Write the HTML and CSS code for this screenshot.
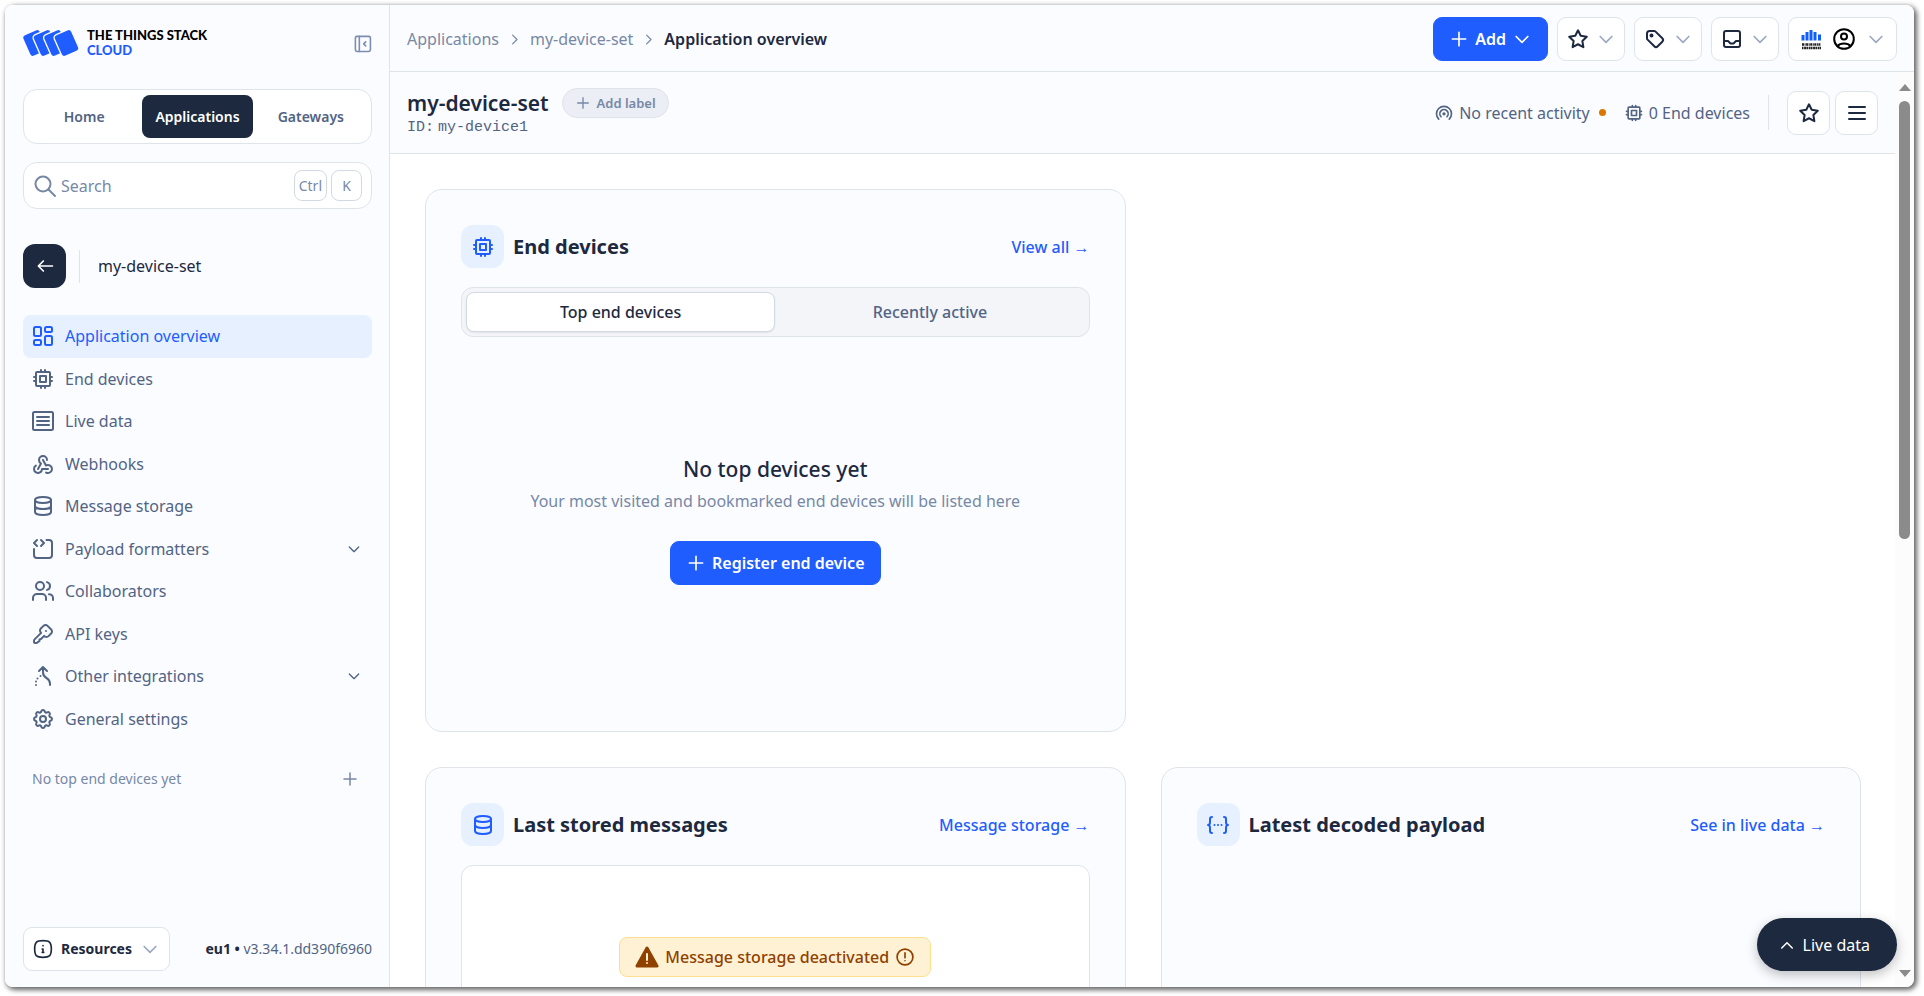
FILE: index.html
```html
<!DOCTYPE html>
<html lang="en">
<head>
    <meta charset="UTF-8">
    <meta name="viewport" content="width=device-width, initial-scale=1.0">
    <title>Application overview - my-device-set - The Things Stack Cloud</title>
    <link rel="stylesheet" href="styles.css">
</head>
<body>

    <!-- icon set -->
    <svg class="sprite" aria-hidden="true">
        <symbol id="i-cpu" viewBox="0 0 24 24"><rect x="5" y="5" width="14" height="14" rx="1"/><path d="M9 9h6v6H9zM3 10h2M3 14h2M10 3v2M14 3v2M21 10h-2M21 14h-2M14 21v-2M10 21v-2"/></symbol>
        <symbol id="i-dashboard" viewBox="0 0 24 24"><rect x="3" y="3" width="7" height="9" rx="1.5"/><rect x="3" y="16" width="7" height="5" rx="1.5"/><rect x="14" y="3" width="7" height="5" rx="1.5"/><rect x="14" y="12" width="7" height="9" rx="1.5"/></symbol>
        <symbol id="i-list" viewBox="0 0 24 24"><rect x="2" y="3" width="20" height="18" rx="1.5"/><path d="M6 8h12M6 12h12M6 16h12"/></symbol>
        <symbol id="i-webhook" viewBox="0 0 24 24"><path d="M4.876 13.61a4 4 0 1 0 6.124 3.39h6M15.066 20.502a4 4 0 1 0 1.934-7.502c-.706 0-1.424.179-2 .5l-3-5.5M16 8a4 4 0 1 0-8 0c0 1.506.77 2.818 2 3.5l-3 5.5"/></symbol>
        <symbol id="i-database" viewBox="0 0 24 24"><ellipse cx="12" cy="6" rx="8" ry="3"/><path d="M4 6v6a8 3 0 0 0 16 0V6M4 12v6a8 3 0 0 0 16 0v-6"/></symbol>
        <symbol id="i-source" viewBox="0 0 24 24"><path d="M15.500 3H18a3 3 0 0 1 3 3v12a3 3 0 0 1-3 3H6a3 3 0 0 1-3-3v-6M6 3L3 6l3 3M10 9l3-3-3-3"/></symbol>
        <symbol id="i-users" viewBox="0 0 24 24"><circle cx="9" cy="7" r="4"/><path d="M2 21v-2a4 4 0 0 1 4-4h5a4 4 0 0 1 4 4v2M16 3.13a4 4 0 0 1 0 7.75M22 21v-2a4 4 0 0 0-4-3.850"/></symbol>
        <symbol id="i-key" viewBox="0 0 24 24"><path d="M16.555 3.843l3.602 3.602a2.877 2.877 0 0 1 0 4.069l-2.643 2.643a2.877 2.877 0 0 1-4.069 0l-.301-.301-3.144 3.144-1.500.5v1.500l-1.914 1.414a2 2 0 0 1-1.414.586H4a1 1 0 0 1-1-1v-1.172a2 2 0 0 1 .586-1.414l6.558-6.558-.301-.301a2.877 2.877 0 0 1 0-4.069l2.643-2.643a2.877 2.877 0 0 1 4.069 0zM15 9h.01"/></symbol>
        <symbol id="i-merge" viewBox="0 0 24 24"><path d="M8 7l4-4 4 4M12 3v5.394a6.737 6.737 0 0 0 3.500 5.606 6.737 6.737 0 0 1 3.500 5.606V21M5 21v.01M5 17.5v.01M6.5 14.5v.01M9.5 12v.01"/></symbol>
        <symbol id="i-settings" viewBox="0 0 24 24"><path d="M10.325 4.317c.426-1.756 2.924-1.756 3.35 0a1.724 1.724 0 0 0 2.573 1.066c1.543-.94 3.31.826 2.37 2.37a1.724 1.724 0 0 0 1.065 2.572c1.756.426 1.756 2.924 0 3.35a1.724 1.724 0 0 0-1.066 2.573c.94 1.543-.826 3.31-2.37 2.37a1.724 1.724 0 0 0-2.572 1.065c-.426 1.756-2.924 1.756-3.35 0a1.724 1.724 0 0 0-2.573-1.066c-1.543.94-3.31-.826-2.37-2.37a1.724 1.724 0 0 0-1.065-2.572c-1.756-.426-1.756-2.924 0-3.35a1.724 1.724 0 0 0 1.066-2.573c-.94-1.543.826-3.31 2.37-2.37 1 .608 2.296.07 2.572-1.065z"/><circle cx="12" cy="12" r="3"/></symbol>
        <symbol id="i-star" viewBox="0 0 24 24"><path d="M12 17.250l-5.400 2.900 1.030-6.150-4.430-4.300 6.100-.9L12 3.300l2.700 5.500 6.100.9-4.430 4.300 1.030 6.150z"/></symbol>
        <symbol id="i-tag" viewBox="0 0 24 24"><circle cx="8.500" cy="8.500" r="1"/><path d="M4 6.500v4.672a2 2 0 0 0 .586 1.414l6.710 6.710a2.41 2.41 0 0 0 3.408 0l4.592-4.592a2.41 2.41 0 0 0 0-3.408l-6.710-6.710A2 2 0 0 0 11.172 4H6.500A2.500 2.500 0 0 0 4 6.500z"/></symbol>
        <symbol id="i-inbox" viewBox="0 0 24 24"><rect x="4" y="4" width="16" height="16" rx="2"/><path d="M4 14h4l2.500 2.500h3L16 14h4"/></symbol>
        <symbol id="i-user" viewBox="0 0 24 24"><circle cx="12" cy="12" r="9.800"/><circle cx="12" cy="9.500" r="3"/><path d="M5.500 19a7.500 5 0 0 1 13 0"/></symbol>
        <symbol id="i-broadcast" viewBox="0 0 24 24"><path d="M18.364 19.364a9 9 0 1 0-12.728 0M15.536 16.536a5 5 0 1 0-7.072 0"/><circle cx="12" cy="13" r="1"/></symbol>
        <symbol id="i-info" viewBox="0 0 24 24"><path d="M12 2c8 0 10 2 10 10s-2 10-10 10S2 20 2 12 4 2 12 2zM12 8h.01M11 12h1v4h-1M13 16h-1"/></symbol>
        <symbol id="i-plus" viewBox="0 0 24 24"><path d="M12 4v16M4 12h16"/></symbol>
        <symbol id="i-down" viewBox="0 0 24 24"><path d="M5 9l7 7 7-7"/></symbol>
        <symbol id="i-up" viewBox="0 0 24 24"><path d="M5 16l7-7 7 7"/></symbol>
        <symbol id="i-right" viewBox="0 0 24 24"><path d="M9 5l7 7-7 7"/></symbol>
        <symbol id="i-back" viewBox="0 0 24 24"><path d="M21 12H4M10 6l-6 6 6 6"/></symbol>
        <symbol id="i-search" viewBox="0 0 24 24"><circle cx="10" cy="10" r="7.500"/><path d="M22 22l-6.500-6.500"/></symbol>
        <symbol id="i-menu" viewBox="0 0 24 24"><path d="M4 6h16M4 12h16M4 18h16"/></symbol>
        <symbol id="i-collapse" viewBox="0 0 24 24"><rect x="3" y="3" width="19" height="19" rx="2"/><path d="M8 3v19M16 10l-2.500 2.500L16 15"/></symbol>
        <symbol id="i-json" viewBox="0 0 24 24"><path d="M6 4a2 2 0 0 0-2 2v3a2 3 0 0 1-2 3 2 3 0 0 1 2 3v3a2 2 0 0 0 2 2M18 4a2 2 0 0 1 2 2v3a2 3 0 0 0 2 3 2 3 0 0 0-2 3v3a2 2 0 0 1-2 2M8.500 12h.01M12 12h.01M15.500 12h.01"/></symbol>
        <symbol id="i-alert" viewBox="0 0 24 24"><circle cx="12" cy="12" r="9.500"/><path d="M12 7v6M12 16.500v.01"/></symbol>
    </svg>

    <div class="window">
        <aside class="sidebar">
            <div class="brand">
                <svg class="logo" viewBox="0 0 56 28" aria-hidden="true">
                    <g class="logo-tile">
                        <rect x="2.500" y="2.200" width="19" height="23.600" rx="3.500" transform="rotate(-24 12 14)"/>
                        <rect x="13" y="2.200" width="19" height="23.600" rx="3.500" transform="rotate(-24 22.500 14)"/>
                        <rect x="23.500" y="2.200" width="19" height="23.600" rx="3.500" transform="rotate(-24 33 14)"/>
                        <rect x="34" y="2.200" width="19" height="23.600" rx="3.500" transform="rotate(-24 43.500 14)"/>
                    </g>
                </svg>
                <div class="brand-name">
                    <span>THE THINGS STACK</span>
                    <span class="brand-cloud">CLOUD</span>
                </div>
                <button class="collapse" aria-label="Collapse sidebar"><svg class="icon"><use href="#i-collapse"/></svg></button>
            </div>

            <nav class="switcher">
                <a href="#">Home</a>
                <a href="#" class="active">Applications</a>
                <a href="#">Gateways</a>
            </nav>

            <label class="search">
                <svg class="icon"><use href="#i-search"/></svg>
                <input type="text" placeholder="Search" aria-label="Search">
                <kbd>Ctrl</kbd>
                <kbd>K</kbd>
            </label>

            <div class="entity">
                <button class="back" aria-label="Back"><svg class="icon"><use href="#i-back"/></svg></button>
                <span class="entity-name">my-device-set</span>
            </div>

            <nav class="menu">
                <a href="#" class="active"><svg class="icon"><use href="#i-dashboard"/></svg>Application overview</a>
                <a href="#"><svg class="icon"><use href="#i-cpu"/></svg>End devices</a>
                <a href="#"><svg class="icon"><use href="#i-list"/></svg>Live data</a>
                <a href="#"><svg class="icon"><use href="#i-webhook"/></svg>Webhooks</a>
                <a href="#"><svg class="icon"><use href="#i-database"/></svg>Message storage</a>
                <a href="#"><svg class="icon"><use href="#i-source"/></svg>Payload formatters<svg class="icon chevron"><use href="#i-down"/></svg></a>
                <a href="#"><svg class="icon"><use href="#i-users"/></svg>Collaborators</a>
                <a href="#"><svg class="icon"><use href="#i-key"/></svg>API keys</a>
                <a href="#"><svg class="icon"><use href="#i-merge"/></svg>Other integrations<svg class="icon chevron"><use href="#i-down"/></svg></a>
                <a href="#"><svg class="icon"><use href="#i-settings"/></svg>General settings</a>
            </nav>

            <div class="top-devices">
                <span>No top end devices yet</span>
                <button aria-label="Add end device"><svg class="icon"><use href="#i-plus"/></svg></button>
            </div>

            <div class="sidebar-footer">
                <button class="btn resources"><svg class="icon"><use href="#i-info"/></svg>Resources<svg class="icon caret"><use href="#i-down"/></svg></button>
                <span class="version"><b>eu1 •</b> v3.34.1.dd390f6960</span>
            </div>
        </aside>

        <div class="main">
            <header class="topbar">
                <nav class="breadcrumbs">
                    <a href="#">Applications</a>
                    <svg class="icon"><use href="#i-right"/></svg>
                    <a href="#">my-device-set</a>
                    <svg class="icon"><use href="#i-right"/></svg>
                    <span class="current">Application overview</span>
                </nav>
                <div class="actions">
                    <button class="btn btn-primary add"><svg class="icon"><use href="#i-plus"/></svg>Add<svg class="icon caret"><use href="#i-down"/></svg></button>
                    <button class="btn" aria-label="Bookmarks"><svg class="icon"><use href="#i-star"/></svg><svg class="icon caret"><use href="#i-down"/></svg></button>
                    <button class="btn" aria-label="Labels"><svg class="icon"><use href="#i-tag"/></svg><svg class="icon caret"><use href="#i-down"/></svg></button>
                    <button class="btn" aria-label="Notifications"><svg class="icon"><use href="#i-inbox"/></svg><svg class="icon caret"><use href="#i-down"/></svg></button>
                    <button class="btn profile" aria-label="Profile">
                        <svg class="tti" viewBox="0 0 21 21" aria-hidden="true">
                            <g class="tti-bars"><path d="M2 6v5.500M6 3v8.500M10 1v10.500M14 3v8.500M18.500 5.500v6"/></g>
                            <g class="tti-text"><path d="M1 15.500h19" stroke-dasharray="2 .6 1 .5"/><path d="M1 19h19" stroke-dasharray="1.500 .6 2 .4"/></g>
                        </svg>
                        <svg class="icon user"><use href="#i-user"/></svg>
                        <svg class="icon caret"><use href="#i-down"/></svg>
                    </button>
                </div>
            </header>

            <div class="viewport">
                <div class="page">
                    <div class="title-bar">
                        <div>
                            <div class="title-row">
                                <h1>my-device-set</h1>
                                <button class="label-btn"><svg class="icon"><use href="#i-plus"/></svg>Add label</button>
                            </div>
                            <div class="entity-id"><span>ID:</span><span>my-device1</span></div>
                        </div>
                        <div class="status">
                            <span class="stat"><svg class="icon"><use href="#i-broadcast"/></svg>No recent activity<i class="dot"></i></span>
                            <span class="stat"><svg class="icon"><use href="#i-cpu"/></svg>0 End devices</span>
                            <span class="divider"></span>
                            <div class="status-btns">
                                <button class="btn square" aria-label="Bookmark"><svg class="icon"><use href="#i-star"/></svg></button>
                                <button class="btn square" aria-label="More"><svg class="icon"><use href="#i-menu"/></svg></button>
                            </div>
                        </div>
                    </div>

                    <div class="cards">
                        <section class="card devices">
                            <div class="card-head">
                                <span class="card-icon"><svg class="icon"><use href="#i-cpu"/></svg></span>
                                <h2>End devices</h2>
                                <a href="#">View all →</a>
                            </div>
                            <div class="tabs">
                                <button class="active">Top end devices</button>
                                <button>Recently active</button>
                            </div>
                            <div class="empty">
                                <h3>No top devices yet</h3>
                                <p>Your most visited and bookmarked end devices will be listed here</p>
                                <button class="btn btn-primary"><svg class="icon"><use href="#i-plus"/></svg>Register end device</button>
                            </div>
                        </section>

                        <section class="card messages">
                            <div class="card-head">
                                <span class="card-icon"><svg class="icon"><use href="#i-database"/></svg></span>
                                <h2>Last stored messages</h2>
                                <a href="#">Message storage →</a>
                            </div>
                            <div class="panel">
                                <div class="notice">
                                    <svg class="warning" viewBox="0 0 24 22" aria-hidden="true"><path class="warning-body" d="M12 2L22 20H2z"/><path class="warning-mark" d="M12 8v6M12 17v.01"/></svg>
                                    Message storage deactivated
                                    <svg class="icon"><use href="#i-alert"/></svg>
                                </div>
                            </div>
                        </section>

                        <section class="card payload">
                            <div class="card-head">
                                <span class="card-icon"><svg class="icon"><use href="#i-json"/></svg></span>
                                <h2>Latest decoded payload</h2>
                                <a href="#">See in live data →</a>
                            </div>
                        </section>
                    </div>
                </div>

                <div class="scrollbar" aria-hidden="true">
                    <span class="arrow-up"></span>
                    <span class="track"><span class="thumb"></span></span>
                    <span class="arrow-down"></span>
                </div>
            </div>
        </div>

        <button class="live-data"><svg class="icon"><use href="#i-up"/></svg>Live data</button>
    </div>

</body>
</html>
```
FILE: styles.css
```css
* {
    box-sizing: border-box;
}
body {
    margin: 0;
    height: 100vh;
    padding: 5px 10px 9px 5px;
    background-color: #fff;
    font-family: "Segoe UI", "Noto Sans", "Open Sans", sans-serif;
    font-size: 16px;
    line-height: 24px;
    color: #1d293f;
    overflow: hidden;
}
a {
    color: inherit;
    text-decoration: none;
}
button {
    font: inherit;
    color: inherit;
    border: none;
    background: none;
    padding: 0;
    cursor: pointer;
}
h1, h2, h3, p {
    margin: 0;
}
.sprite {
    position: absolute;
    width: 0;
    height: 0;
}
.icon {
    width: 24px;
    height: 24px;
    flex: none;
    fill: none;
    stroke: currentColor;
    stroke-width: 2;
    stroke-linecap: round;
    stroke-linejoin: round;
}

.window {
    position: relative;
    display: flex;
    height: 100%;
    border-radius: 8px;
    background-color: #fff;
    box-shadow: 2px 2px 5px 1px rgba(0, 0, 0, 0.6);
    overflow: hidden;
}

/* sidebar */
.sidebar {
    display: flex;
    flex-direction: column;
    width: 385px;
    flex: none;
    padding: 24px 17px 16px 18px;
    background-color: #fbfcff;
    border-right: 1px solid #dfe3ea;
}
.brand {
    display: flex;
    align-items: center;
    height: 28px;
    margin-bottom: 32px;
}
.logo {
    width: 56px;
    height: 28px;
}
.logo-tile rect {
    fill: #1f5dff;
    stroke: #fbfcff;
    stroke-width: 1.4;
}
.brand-name {
    display: flex;
    flex-direction: column;
    margin-left: 8px;
    font-family: "Lato", sans-serif;
    font-size: 13px;
    line-height: 15px;
    font-weight: 900;
    color: #000;
}
.brand-cloud {
    color: #1f5dff;
}
.collapse {
    display: flex;
    margin-left: auto;
    color: #7c8db0;
}
.collapse .icon {
    width: 19px;
    height: 19px;
}
.switcher {
    display: grid;
    grid-template-columns: 1fr 1fr 1fr;
    gap: 3px;
    height: 55px;
    padding: 5px;
    margin-bottom: 18px;
    border: 1px solid #dfe3ea;
    border-radius: 14px;
    background-color: #fff;
    font-size: 14px;
    font-weight: 600;
    color: #526484;
}
.switcher a {
    display: flex;
    align-items: center;
    justify-content: center;
    border-radius: 8px;
}
.switcher .active {
    background-color: #1d293f;
    color: #fff;
}
.search {
    display: flex;
    align-items: center;
    gap: 4px;
    height: 47px;
    padding: 0 9px;
    margin-bottom: 35px;
    border: 1px solid #dfe3ea;
    border-radius: 14px;
    background-color: #fff;
    color: #7788a6;
}
.search input {
    flex: 1;
    min-width: 0;
    border: none;
    outline: none;
    background: none;
    font: inherit;
    color: inherit;
    padding: 0;
}
.search input::placeholder {
    color: #7788a6;
    opacity: 1;
}
.search kbd {
    min-width: 31px;
    padding: 0 4px;
    border: 1px solid #d3d9e4;
    border-radius: 8px;
    font-family: inherit;
    font-size: 14px;
    line-height: 29px;
    text-align: center;
}
.entity {
    display: flex;
    align-items: center;
    gap: 13px;
    margin-bottom: 27px;
}
.back {
    display: flex;
    align-items: center;
    justify-content: center;
    width: 43px;
    height: 44px;
    border-radius: 12px;
    background-color: #1d293f;
    color: #fff;
}
.back .icon {
    width: 20px;
    height: 20px;
}
.entity-name {
    padding-left: 18px;
    border-left: 1px solid #dfe3ea;
    line-height: 33px;
}
.menu {
    display: grid;
    grid-auto-rows: 1fr;
    height: 425px;
    color: #526484;
}
.menu a {
    display: flex;
    align-items: center;
    gap: 10px;
    padding: 0 8px;
    border-radius: 8px;
}
.menu .active {
    background-color: #e6f0ff;
    color: #1f5dff;
}
.menu .chevron {
    width: 16px;
    height: 16px;
    margin-left: auto;
    margin-right: 2px;
}
.top-devices {
    display: flex;
    align-items: center;
    justify-content: space-between;
    padding: 0 13px 0 9px;
    margin-top: 27px;
    font-size: 14px;
    color: #7788a6;
}
.top-devices button {
    display: flex;
}
.top-devices .icon {
    width: 18px;
    height: 18px;
}
.sidebar-footer {
    display: flex;
    align-items: center;
    justify-content: space-between;
    margin-top: auto;
    font-size: 14px;
}
.version {
    color: #526484;
}
.version b {
    color: #1d293f;
}

/* buttons */
.btn {
    display: flex;
    align-items: center;
    justify-content: center;
    gap: 6px;
    height: 44px;
    padding: 0 8px;
    border: 1px solid #dfe3ea;
    border-radius: 9px;
    background-color: #fff;
}
.btn .caret {
    width: 20px;
    height: 20px;
    color: #9ba9c2;
}
.btn-primary {
    padding: 0 15px;
    border-color: #1f5dff;
    background-color: #1f5dff;
    color: #fff;
    font-weight: 600;
}
.btn-primary .icon {
    width: 20px;
    height: 20px;
}
.btn-primary .caret {
    color: #fff;
}
.resources {
    gap: 8px;
    padding: 0 9px;
    font-weight: 700;
}
.resources .icon {
    width: 20px;
    height: 20px;
}
.square {
    width: 43px;
    padding: 0;
}

/* top bar */
.main {
    display: flex;
    flex-direction: column;
    flex: 1;
    min-width: 0;
}
.topbar {
    display: flex;
    align-items: center;
    justify-content: space-between;
    height: 67px;
    flex: none;
    padding: 2px 17px 0;
    border-bottom: 1px solid #dfe3ea;
    background-color: #fbfcff;
}
.breadcrumbs {
    display: flex;
    align-items: center;
    gap: 8px;
    color: #7788a6;
}
.breadcrumbs .icon {
    width: 15px;
    height: 15px;
}
.breadcrumbs .current {
    font-weight: 600;
    color: #1d293f;
}
.actions {
    display: flex;
    gap: 9px;
}
.profile {
    gap: 10px;
    padding: 0 10px 0 12px;
}
.tti {
    width: 21px;
    height: 21px;
}
.tti-bars {
    fill: none;
    stroke: #0f5dff;
    stroke-width: 3;
}
.tti-text {
    fill: none;
    stroke: #222;
    stroke-width: 2.4;
}
.user {
    color: #000;
}

/* page */
.viewport {
    display: flex;
    flex: 1;
    min-height: 0;
}
.page {
    flex: 1;
    min-width: 0;
    overflow: hidden;
}
.title-bar {
    display: flex;
    align-items: center;
    justify-content: space-between;
    height: 82px;
    padding: 0 17px;
    border-bottom: 1px solid #dfe3ea;
    background-color: #fbfcff;
}
.title-row {
    display: flex;
    align-items: center;
    gap: 13px;
}
.title-row h1 {
    font-size: 21px;
    font-weight: 600;
    line-height: 24px;
}
.label-btn {
    display: flex;
    align-items: center;
    gap: 6px;
    height: 30px;
    padding: 0 12px;
    border: 1px solid #dfe3ea;
    border-radius: 15px;
    background-color: #ebeef4;
    font-size: 13px;
    font-weight: 600;
    color: #7788a6;
}
.label-btn .icon {
    width: 16px;
    height: 16px;
}
.entity-id {
    display: flex;
    gap: 4px;
    font-family: "Liberation Mono", monospace;
    font-size: 15px;
    line-height: 20px;
    color: #526484;
}
.status {
    display: flex;
    align-items: center;
    gap: 18px;
    color: #526484;
}
.stat {
    display: flex;
    align-items: center;
    gap: 5px;
}
.stat .icon {
    width: 20px;
    height: 20px;
}
.dot {
    width: 7px;
    height: 7px;
    margin-left: 4px;
    border-radius: 50%;
    background-color: #db7600;
}
.divider {
    width: 1px;
    height: 35px;
    background-color: #dfe3ea;
}
.status-btns {
    display: flex;
    gap: 5px;
    color: #1d293f;
}
.cards {
    display: grid;
    grid-template-columns: 1fr 1fr;
    gap: 35px;
    padding: 35px 34px 35px 35px;
}
.card {
    padding: 35px;
    border: 1px solid #dfe3ea;
    border-radius: 17px;
    background-color: #fbfcff;
}
.devices {
    display: flex;
    flex-direction: column;
    min-height: 543px;
}
.messages {
    grid-column: 1;
    min-height: 543px;
}
.card-head {
    display: flex;
    align-items: center;
    gap: 9px;
    margin-bottom: 19px;
}
.card-icon {
    display: flex;
    align-items: center;
    justify-content: center;
    width: 43px;
    height: 43px;
    border-radius: 12px;
    background-color: #e6f0ff;
    color: #1f5dff;
}
.card-head h2 {
    font-size: 20px;
    font-weight: 700;
    line-height: 28px;
}
.card-head a {
    margin-left: auto;
    font-weight: 500;
    color: #1f5dff;
}
.tabs {
    display: grid;
    grid-template-columns: 1fr 1fr;
    height: 50px;
    padding: 4px;
    border: 1px solid #dfe3ea;
    border-radius: 12px;
    background-color: #f3f5f9;
    font-weight: 500;
    color: #526484;
}
.tabs button {
    border: 1px solid transparent;
    border-radius: 8px;
}
.tabs .active {
    border-color: #d3d9e4;
    background-color: #fff;
    box-shadow: 0 1px 2px rgba(0, 0, 0, 0.08);
    color: #1d293f;
}
.empty {
    display: flex;
    flex-direction: column;
    align-items: center;
    justify-content: center;
    flex: 1;
    padding-top: 6px;
}
.empty h3 {
    font-size: 21px;
    font-weight: 500;
    line-height: 28px;
}
.empty p {
    margin: 6px 0 28px;
    color: #7788a6;
}
.panel {
    display: flex;
    justify-content: center;
    height: 400px;
    padding-top: 71px;
    border: 1px solid #dfe3ea;
    border-radius: 12px;
    background-color: #fff;
}
.notice {
    display: flex;
    align-items: center;
    align-self: flex-start;
    gap: 6px;
    height: 40px;
    padding: 0 15px;
    border: 1px solid #ffdf8f;
    border-radius: 8px;
    background-color: #fff2d4;
    font-weight: 500;
    color: #8f4100;
}
.notice .icon {
    width: 20px;
    height: 20px;
}
.warning {
    width: 24px;
    height: 22px;
}
.warning-body {
    fill: #8f4100;
    stroke: #8f4100;
    stroke-width: 3;
    stroke-linejoin: round;
}
.warning-mark {
    stroke: #fff2d4;
    stroke-width: 2;
    stroke-linecap: round;
}

/* scrollbar */
.scrollbar {
    display: flex;
    flex-direction: column;
    align-items: center;
    width: 19px;
    padding: 12px 0 10px;
    background-color: #fcfcfc;
}
.arrow-up, .arrow-down {
    border: 6px solid transparent;
}
.arrow-up {
    border-top: none;
    border-bottom: 7px solid #8b8b8b;
}
.arrow-down {
    border-bottom: none;
    border-top: 7px solid #8b8b8b;
}
.track {
    flex: 1;
    width: 11px;
    padding: 10px 0;
}
.thumb {
    display: block;
    height: 51%;
    border-radius: 6px;
    background-color: #8b8b8b;
}

/* floating button */
.live-data {
    position: absolute;
    right: 17px;
    bottom: 16px;
    display: flex;
    align-items: center;
    gap: 7px;
    height: 53px;
    padding: 0 27px 0 21px;
    border-radius: 27px;
    background-color: #1d293f;
    box-shadow: 0 4px 12px rgba(0, 0, 0, 0.25);
    color: #fff;
}
.live-data .icon {
    width: 18px;
    height: 18px;
}
```
